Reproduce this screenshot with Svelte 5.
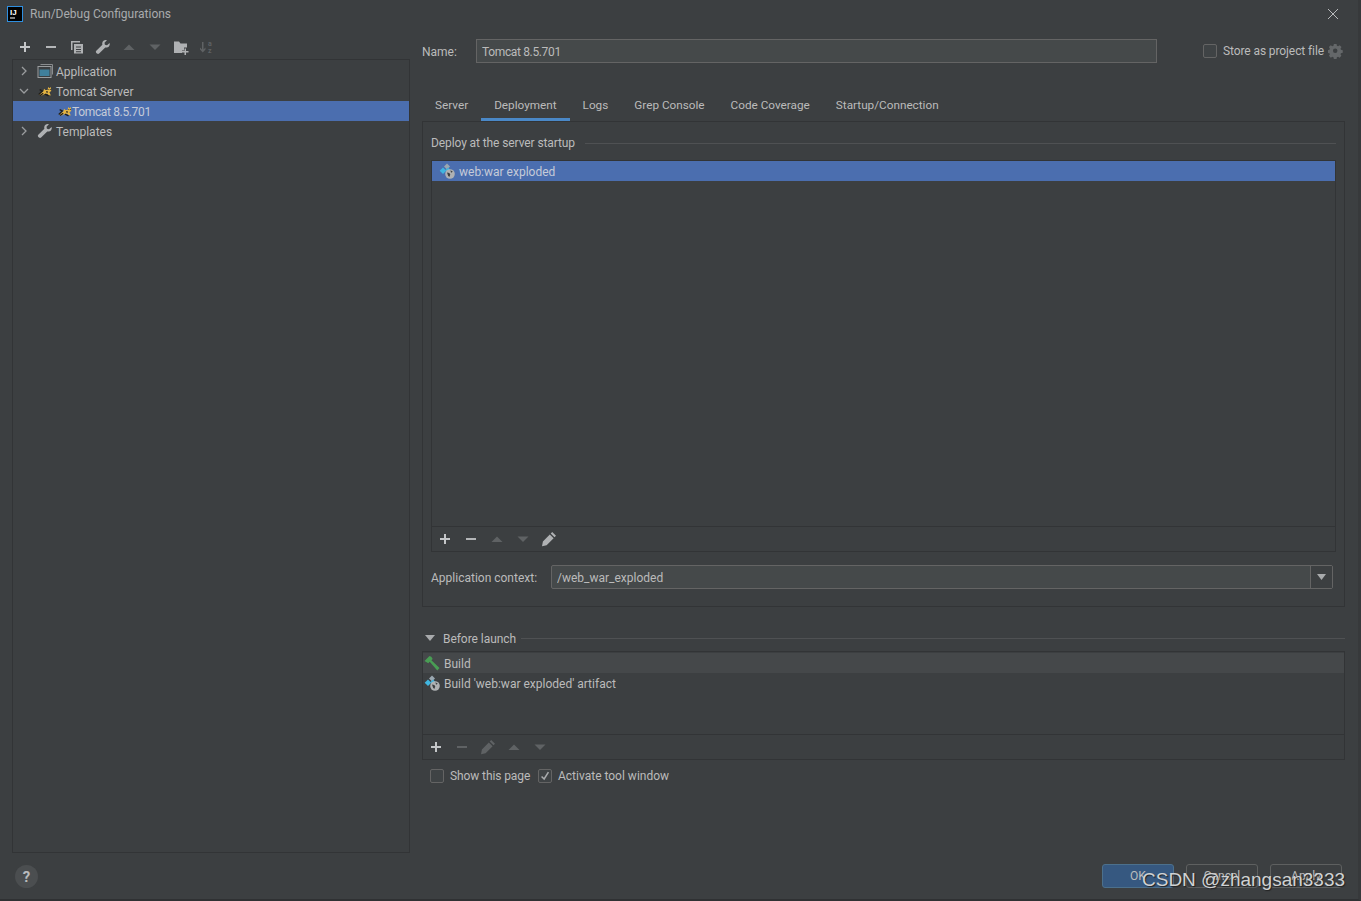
<script lang="ts">
  const tabs = ['Server', 'Deployment', 'Logs', 'Grep Console', 'Code Coverage', 'Startup/Connection'];
  const activeTab = 'Deployment';
</script>

{#snippet plus()}
  <svg class="ic" viewBox="0 0 16 16"><path d="M7 3h2v4h4v2H9v4H7V9H3V7h4z" fill="#c4c6c8" /></svg>
{/snippet}
{#snippet minus(dim = false)}
  <svg class="ic" viewBox="0 0 16 16"><path d="M3 7h10v2H3z" fill={dim ? '#5f6264' : '#b4b6b8'} /></svg>
{/snippet}
{#snippet up()}
  <svg class="ic" viewBox="0 0 16 16"><path d="M2.500 11 8 5.500 13.500 11z" fill="#5f6264" /></svg>
{/snippet}
{#snippet down()}
  <svg class="ic" viewBox="0 0 16 16"><path d="M2.500 5.500 8 11l5.500-5.500z" fill="#5f6264" /></svg>
{/snippet}
{#snippet wrench(color = '#afb1b3')}
  <svg class="ic" viewBox="0 0 16 16"><path d="M14.600 3.900 12 6.300 9.900 5.800 9.500 3.800 11.900 1.300C9.900.6 7.800 1.700 7.300 3.700c-.2.800-.1 1.500.1 2.100L1.300 11.800c-.6.600-.6 1.500 0 2.100l.7.700c.6.600 1.500.6 2.100 0l6.200-6.100c2.500.7 5.200-1.700 4.300-4.600z" fill={color} /></svg>
{/snippet}
{#snippet pencil(color = '#afb1b3')}
  <svg class="ic" viewBox="0 0 16 16"><path d="M11.200 1l3.800 3.800-1.500 1.500-3.800-3.800zM8.800 3.400l3.800 3.800-7 7-4.600 1 .9-4.800z" fill={color} /></svg>
{/snippet}
{#snippet tomcat()}
  <svg class="ic" viewBox="-1 -1 18 18">
    <path d="M1 12 6 8.500l1-3 1.500 1.500L11 7l.5-3.500 1.500 1.500 1.500-1.500.5 4.500-2 1.500 1.500 3.500-2.500-.5-1.500-1.500-3 .5-3 1.500z" fill="#e3b341" />
    <path d="M1 12 5 8 2 6.500M8 11.500l4 2M6 10.500 2.500 13M9.500 8.500l1.500 1" stroke="#1f1d1a" stroke-width="1.500" fill="none" />
    <path d="M11.800 6h1v1h-1zM13.600 6h1v1h-1z" fill="#1f1d1a" />
  </svg>
{/snippet}
{#snippet artifact()}
  <svg class="ic" viewBox="0 0 16 16">
    <path d="M4 4.500l3.300 3.300L4 11.100.7 7.800z" fill="#40b6e0" />
    <path d="M8 .5l3 3-3 3-3-3z" fill="#9aa7b0" />
    <path d="M9 4.500l2.500 2.500L9 9.500 6.500 7z" fill="#40b6e0" />
    <circle cx="11" cy="11" r="4.800" fill="#afb1b3" />
    <path d="M8 9.500l2.300.5 1 1.500-1 2.500-1.200-1.200zM11.500 7.300l2.300 1.500-1.800 1z" fill="#3c3f41" />
  </svg>
{/snippet}
{#snippet hammer()}
  <svg class="ic" viewBox="0 0 16 16"><path d="M.5 6 5.500 1l1.800.8 1.400 2.200-1.300 1.300L15.500 13l-2.200 2.400-7.600-8.600L4.300 8.200z" fill="#499c54" /></svg>
{/snippet}

<div class="window">
  <header class="title">
    <svg class="logo" viewBox="0 0 16 16">
      <rect x=".5" y=".5" width="15" height="15" fill="#000" stroke="#2f8fe0" />
      <text x="3" y="9" class="logo-text">IJ</text>
      <rect x="3" y="11.500" width="5" height="1" fill="#fff" />
    </svg>
    <span>Run/Debug Configurations</span>
    <svg class="close" viewBox="0 0 12 12"><path d="M1 1l10 10M11 1 1 11" stroke="#b8babc" stroke-width="1" fill="none" /></svg>
  </header>

  <div class="main">
    <aside class="left">
      <div class="toolbar tree-tools">
        {@render plus()}
        {@render minus()}
        <svg class="ic" viewBox="0 0 16 16"><path d="M2 2h9v1.500H3.500V11H2z" fill="#afb1b3" /><path d="M5 5h9v9.500H5zM7 7.500v1h5v-1zm0 2.500v1h5v-1zm0 2.200v1h5v-1z" fill="#afb1b3" fill-rule="evenodd" /></svg>
        {@render wrench()}
        {@render up()}
        {@render down()}
        <svg class="ic" viewBox="0 0 16 16"><path d="M1 2.500h5l1.500 2H14v4h-3v3H9v2.500H1z" fill="#afb1b3" /><path d="M11.500 9.500h1.500V12h2.500v1.500H13V16h-1.500v-2.500H9V12h2.500z" fill="#afb1b3" /></svg>
        <svg class="ic" viewBox="0 0 16 16"><path d="M3 3h1.500v7.500L6.500 8.500v2L3.750 13.500 1 10.500v-2L3 10.500z" fill="#5f6264" /><text x="9" y="7" class="az">a</text><text x="9" y="14" class="az">z</text></svg>
      </div>
      <div class="tree">
        <div class="row">
          <svg class="chev" viewBox="0 0 12 12"><path d="M4 2l4 4-4 4" stroke="#9a9c9e" stroke-width="1.300" fill="none" /></svg>
          <svg class="ic" viewBox="0 0 16 16"><path d="M3.500 1.500h12v10" stroke="#8a8d8f" fill="none" /><rect x="1" y="3.500" width="13" height="11" fill="#3c3f41" stroke="#9a9d9f" /><rect x="2.500" y="6.500" width="10" height="6.500" fill="#40809c" /></svg>
          <span>Application</span>
        </div>
        <div class="row">
          <svg class="chev" viewBox="0 0 12 12"><path d="M2 4l4 4 4-4" stroke="#9a9c9e" stroke-width="1.300" fill="none" /></svg>
          {@render tomcat()}
          <span>Tomcat Server</span>
        </div>
        <div class="row selected nested">
          {@render tomcat()}
          <span class="ver">Tomcat 8.5.701</span>
        </div>
        <div class="row">
          <svg class="chev" viewBox="0 0 12 12"><path d="M4 2l4 4-4 4" stroke="#9a9c9e" stroke-width="1.300" fill="none" /></svg>
          {@render wrench()}
          <span>Templates</span>
        </div>
      </div>
      <div class="help">?</div>
    </aside>

    <section class="right">
      <div class="name-row">
        <label class="name-label" for="cfg-name">Name:</label>
        <input id="cfg-name" class="field name-field ver" value="Tomcat 8.5.701" />
        <span class="box store-box"></span>
        <span class="store-label">Store as project file</span>
        <svg class="ic gear" viewBox="0 0 16 16"><path fill-rule="evenodd" d="M6.500 1h3l.4 2 1.300.6 1.800-1.100 2 2-1.100 1.800.5 1.200 2 .5v2.900l-2 .5-.5 1.200 1 1.700-2 2-1.700-1-1.300.5-.4 2h-3l-.4-2-1.300-.5-1.700 1-2-2 1-1.700-.5-1.200-2-.5V8l2-.5.5-1.200-1.100-1.800 2-2 1.800 1.100 1.300-.6zM8 6a2.500 2.500 0 1 0 0 5 2.500 2.500 0 0 0 0-5z" transform="scale(.9)" fill="#646769" /></svg>
      </div>

      <nav class="tabs">
        {#each tabs as tab}
          <span class="tab" class:active={tab === activeTab}>{tab}</span>
        {/each}
      </nav>

      <div class="tab-panel">
        <div class="group-title">
          <span>Deploy at the server startup</span>
          <i></i>
        </div>
        <div class="list deploy-list">
          <div class="list-body">
            <div class="row selected artifact-row">
              {@render artifact()}
              <span>web:war exploded</span>
            </div>
          </div>
          <div class="toolbar list-tools">
            {@render plus()}
            {@render minus()}
            {@render up()}
            {@render down()}
            {@render pencil()}
          </div>
        </div>
        <div class="context-row">
          <label for="cfg-context">Application context:</label>
          <div class="combo">
            <input id="cfg-context" value="/web_war_exploded" />
            <span class="combo-btn"><svg viewBox="0 0 9 6"><path d="M0 0h9L4.500 6z" fill="#a8aaac" /></svg></span>
          </div>
        </div>
      </div>

      <div class="before-title">
        <svg viewBox="0 0 10 6"><path d="M0 0h10L5 6z" fill="#a8aaac" /></svg>
        <span>Before launch</span>
        <i></i>
      </div>
      <div class="list launch-list">
        <div class="list-body">
          <div class="row hovered">
            {@render hammer()}
            <span>Build</span>
          </div>
          <div class="row">
            {@render artifact()}
            <span>Build 'web:war exploded' artifact</span>
          </div>
        </div>
        <div class="toolbar list-tools">
          {@render plus()}
          {@render minus(true)}
          {@render pencil('#5f6264')}
          {@render up()}
          {@render down()}
        </div>
      </div>
      <div class="checks">
        <span class="box"></span>
        <span class="check-label first">Show this page</span>
        <span class="box"><svg viewBox="0 0 14 14"><path d="M3 7.500 6 10.500l5-8" stroke="#a9abad" stroke-width="1.800" fill="none" /></svg></span>
        <span class="check-label">Activate tool window</span>
      </div>

      <footer class="buttons">
        <span class="btn primary">OK</span>
        <span class="btn">Cancel</span>
        <span class="btn">Apply</span>
      </footer>
    </section>
  </div>
  <div class="watermark">CSDN @zhangsan3333</div>
</div>

<style>
  :global(body) {
    margin: 0;
    background: #3c3f41;
  }

  .window {
    position: relative;
    width: 1361px;
    height: 901px;
    box-sizing: border-box;
    background: #3c3f41;
    border-right: 3px solid #37393b;
    border-bottom: 2px solid #2f3133;
    color: #bbbbbb;
    font-family: Roboto, "Noto Sans", sans-serif;
    font-size: 12px;
    overflow: hidden;
  }

  .title {
    display: flex;
    align-items: center;
    height: 27px;
    padding-left: 7px;
    color: #a9abad;
  }
  .logo {
    width: 16px;
    height: 16px;
    margin-right: 7px;
  }
  .logo-text {
    font-family: "Liberation Sans", sans-serif;
    font-size: 8px;
    font-weight: 700;
    fill: #fff;
  }
  .close {
    width: 12px;
    height: 12px;
    margin-left: auto;
    margin-right: 19px;
  }

  .main {
    display: flex;
    height: 872px;
    padding-left: 12px;
  }

  .ic {
    width: 16px;
    height: 16px;
    flex: none;
  }
  .az {
    font-size: 7px;
    font-weight: 700;
    fill: #5f6264;
  }
  .ver {
    letter-spacing: -0.35px;
  }

  .left {
    display: flex;
    flex-direction: column;
    width: 398px;
  }
  .toolbar {
    display: flex;
    align-items: center;
    gap: 10px;
  }
  .tree-tools {
    height: 32px;
    box-sizing: border-box;
    padding: 8px 0 0 5px;
  }
  .tree {
    height: 794px;
    box-sizing: border-box;
    padding-top: 1px;
    border: 1px solid #323436;
  }
  .row {
    display: flex;
    align-items: center;
    height: 20px;
    color: #bbbbbb;
  }
  .row span {
    margin-left: 3px;
    margin-top: 2px;
  }
  .chev {
    width: 12px;
    height: 12px;
    margin: 0 7px 0 5px;
  }
  .selected {
    background: #4b6eaf;
    color: #c5cbd8;
  }
  .nested {
    padding-left: 44px;
  }
  .nested span {
    margin-left: -1px;
  }
  .help {
    display: flex;
    align-items: center;
    justify-content: center;
    width: 23px;
    height: 23px;
    margin: 12px 0 0 3px;
    border-radius: 50%;
    background: #4b4e50;
    color: #b9bbbd;
    font-size: 15px;
    font-weight: 700;
  }

  .right {
    display: flex;
    flex-direction: column;
    width: 923px;
    margin-left: 12px;
  }

  .name-row {
    display: flex;
    align-items: center;
    height: 24px;
    margin-top: 12px;
  }
  .name-label {
    width: 54px;
    flex: none;
    margin-top: 1px;
  }
  .field, .combo {
    box-sizing: border-box;
    background: #45494a;
    border: 1px solid #646464;
  }
  input {
    margin: 0;
    padding: 2px 5px 0;
    outline: none;
    color: #bbbbbb;
    font: inherit;
  }
  .name-field {
    flex: none;
    width: 681px;
    height: 24px;
  }
  .box {
    display: inline-flex;
    box-sizing: border-box;
    width: 14px;
    height: 14px;
    flex: none;
    background: #3f4345;
    border: 1px solid #646464;
    border-radius: 2px;
  }
  .store-box {
    margin-left: 46px;
  }
  .store-label {
    margin-left: 6px;
    letter-spacing: -0.1px;
    white-space: nowrap;
  }
  .gear {
    margin-left: 4px;
  }

  .tabs {
    display: flex;
    height: 31px;
    margin-top: 27px;
    font-size: 11.75px;
  }
  .tab {
    box-sizing: border-box;
    height: 31px;
    padding: 8px 13px 0;
    white-space: nowrap;
  }
  .tab.active {
    border-bottom: 3px solid #4a88c7;
  }

  .tab-panel {
    box-sizing: border-box;
    height: 486px;
    padding: 0 8px;
    border: 1px solid #323436;
  }
  .group-title {
    display: flex;
    align-items: center;
    height: 38px;
    padding-top: 4px;
    box-sizing: border-box;
    letter-spacing: -0.1px;
  }
  .group-title i {
    flex: 1;
    height: 1px;
    margin-left: 10px;
    background: #4f5153;
  }
  .before-title i {
    flex: 1;
    height: 1px;
    margin-left: 5px;
    background: #4f5153;
  }
  .list {
    display: flex;
    flex-direction: column;
    box-sizing: border-box;
    border: 1px solid #323436;
  }
  .list-body {
    flex: 1;
  }
  .deploy-list {
    height: 392px;
    width: 905px;
  }
  .artifact-row {
    padding-left: 7px;
  }
  .artifact-row span {
    margin-left: 4px;
  }
  .list-tools {
    height: 24px;
    padding-left: 5px;
    border-top: 1px solid #323436;
  }
  .context-row {
    display: flex;
    align-items: center;
    margin-top: 13px;
  }
  .context-row label {
    width: 120px;
    margin-top: 2px;
    white-space: nowrap;
  }
  .combo {
    display: flex;
    width: 782px;
    height: 24px;
    border-radius: 2px;
  }
  .combo input {
    flex: 1;
    min-width: 0;
    background: none;
    border: 0;
  }
  .combo-btn {
    display: flex;
    align-items: center;
    justify-content: center;
    width: 21px;
    background: #3c3f41;
    border-left: 1px solid #646464;
  }
  .combo-btn svg {
    width: 9px;
    height: 6px;
  }

  .before-title {
    display: flex;
    align-items: center;
    height: 20px;
    margin-top: 21px;
    padding-left: 3px;
  }
  .before-title span {
    margin-top: 2px;
    letter-spacing: -0.05px;
  }
  .before-title svg {
    width: 10px;
    height: 6px;
    margin-right: 8px;
  }
  .launch-list {
    height: 109px;
    margin-top: 3px;
  }
  .launch-list .list-body {
    padding-top: 1px;
  }
  .launch-list .row {
    padding-left: 1px;
  }
  .launch-list .row span {
    margin-left: 4px;
  }
  .hovered {
    background: #45484a;
  }

  .checks {
    display: flex;
    align-items: center;
    margin-top: 8px;
    padding-left: 8px;
    height: 15px;
  }
  .check-label {
    margin-left: 6px;
    white-space: nowrap;
  }
  .check-label.first {
    width: 88px;
    letter-spacing: -0.1px;
  }

  .buttons {
    display: flex;
    justify-content: flex-end;
    gap: 12px;
    margin-top: 81px;
    padding-right: 3px;
  }
  .btn {
    display: flex;
    align-items: center;
    justify-content: center;
    box-sizing: border-box;
    width: 72px;
    height: 24px;
    border: 1px solid #5e6060;
    border-radius: 3px;
    background: #3c3f41;
  }
  .btn.primary {
    background: #365880;
    border-color: #4c708c;
  }

  .watermark {
    position: absolute;
    left: 1142px;
    top: 869px;
    color: #d0d2d3;
    font-family: "Liberation Sans", sans-serif;
    font-size: 19px;
    white-space: nowrap;
    text-shadow: 1px 1px 1px #222;
  }
</style>
